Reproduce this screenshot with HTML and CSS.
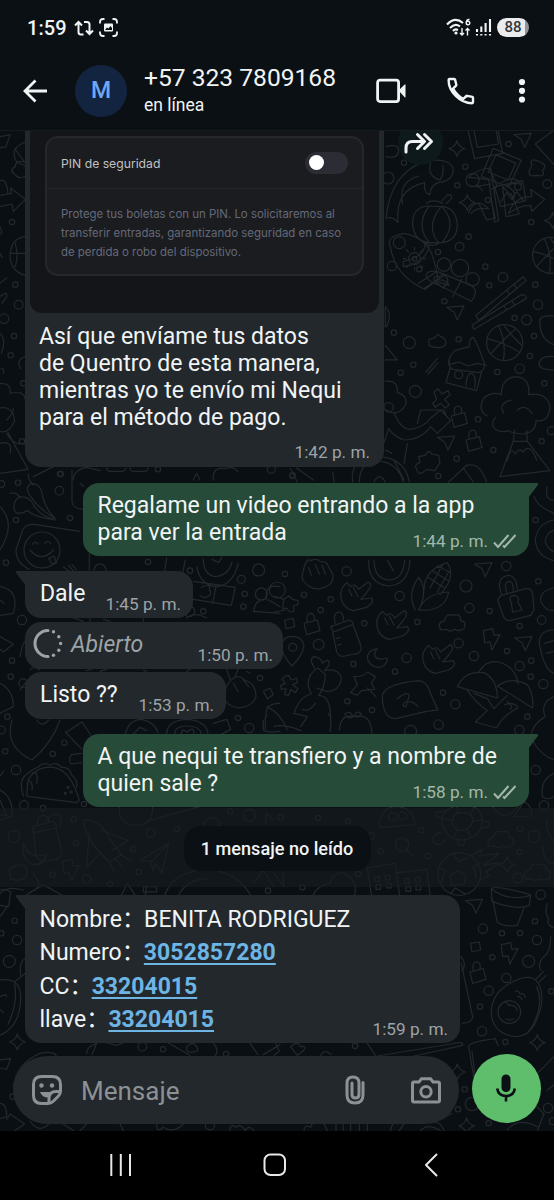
FILE: index.html
```html
<!DOCTYPE html>
<html lang="es">
<head>
<meta charset="utf-8">
<title>Chat</title>
<link rel="stylesheet" href="styles.css">
</head>
<body>
<div class="phone">
  <header class="top">
    <div class="status">
      <span class="clock">1:59</span>
      <svg class="ic-loop" width="20" height="16" viewBox="0 0 20 16"><path d="M4.500 2.500V12q0 2.500 2.500 2.500h2.500M1 5.500l3.500-3.500 3.500 3.500M10 2h3q2.500 0 2.500 2.500v9M12 10.500l3.500 3.500 3.500-3.500"/></svg>
      <svg class="ic-shot" width="19" height="19" viewBox="0 0 19 19"><path d="M1 5.500V4q0-3 3-3h1.500M13.500 1H15q3 0 3 3v1.500M18 13.500V15q0 3-3 3h-1.500M5.500 18H4q-3 0-3-3v-1.500"/><rect class="fill" x="5" y="5.500" width="9" height="8" rx="1"/><path class="dark" d="M6 12l2-2.500 1.500 1 2-2.500 1.500 2v2z"/></svg>
      <span class="grow"></span>
      <svg class="ic-wifi" width="26" height="19" viewBox="0 0 26 19"><path d="M1 6.500Q9-2 17 5M4 10Q9 4.500 14 8.500M7 13Q9 10.500 12 12"/><circle class="fill" cx="10" cy="15" r="1.600"/><path class="thin" d="M16 10v7M14 15l2 2 2-2M21.500 17.500v-7M19.500 12.500l2-2 2 2"/><path class="thin" d="M23.500 1.500Q20.500 1 20.200 4.500M20.200 5a1.800 1.800 0 1 0 3.600 0 1.800 1.800 0 1 0-3.600 0"/></svg>
      <svg class="ic-sig" width="18" height="19" viewBox="0 0 18 19"><path d="M2 11v3M6.300 8.500V14M10.600 5v9M15 1v13"/><path d="M2 16v1.500M6.300 16v1.500M10.600 16v1.500M15 16v1.500"/></svg>
      <span class="battery">88</span>
    </div>
    <div class="bar">
      <svg class="ic-back" width="26" height="26" viewBox="0 0 26 26"><path d="M25 13H3M13.500 2.500L3 13l10.500 10.500"/></svg>
      <div class="avatar">M</div>
      <div class="who"><div class="number">+57 323 7809168</div><div class="online">en línea</div></div>
      <svg class="ic-video" width="31" height="26" viewBox="0 0 31 26"><rect x="1.600" y="2.100" width="21" height="21.500" rx="2.500"/><path class="fill" d="M22.500 12.500L28.700 6.500q.8-.6.800.4v12q0 1-.8.4z"/></svg>
      <svg class="ic-call" width="28" height="28" viewBox="0 0 28 28"><path d="M2.500 2h4.700q.7 0 .9.700l1.200 5q.1.700-.4 1.100L6 11.600C8.500 16 11.700 19.300 16.200 22l2.900-2.900q.5-.5 1.200-.3l5 1.100q.7.200.7.900v4.500q0 .9-.9.900C13 26.200 1.500 14.500 1.600 2.900q0-.9.900-.9zM20 18.900l-4 3.100M9.300 8.300L6 11.600"/></svg>
      <svg class="ic-more" width="8" height="26" viewBox="0 0 8 26"><circle cx="4" cy="4" r="3.100"/><circle cx="4" cy="12.800" r="3.100"/><circle cx="4" cy="21.500" r="3.100"/></svg>
    </div>
  </header>

  <main class="chat">
    <svg class="wallpaper" width="554" height="1001" viewBox="0 130 554 1001">
      <defs>
        <path id="star" d="M0-24Q4-5 24 0 4 5 0 24-4 5-24 0-4-5 0-24z"/>
        <path id="plane" d="M-26-16L26-20 6 22-4-2z"/>
        <path id="bolt" d="M-24-24L4-30 8-10 26-12 2 34-4 10-20 12z"/>
        <path id="lens" d="M14 14L30 30M20-2A20 20 0 1 1-20-2 20 20 0 1 1 20-2z"/>
        <path id="cloud" d="M-34 20Q-46-4-22-8-18-32 4-24 26-32 26-8 46-6 36 16 20 26 8 18-6 28-16 18z"/>
        <path id="lock" d="M-22-4L18-14 26 18-14 30zM-12-8Q-18-34 0-34 12-30 8-12"/>
        <path id="ball" d="M54 0A54 54 0 1 1-54 0 54 54 0 1 1 54 0zM-52-12Q0 0 46 30M-18-50Q6 0-4 54M34-42Q-4-10-42 34M-4-54Q30-10 50 6"/>
        <path id="hand" d="M-46 0Q-54-30-30-50L-18-38Q-4-50 6-30L34-52Q52-46 28-18L12 0 44-4Q56 8 30 24L-10 34Q-38 28-46 0zM-24-30L-14-10M-10-36L4-8"/>
        <path id="box" d="M-14-10L12-14 16 10-10 16z"/>
        <path id="taco" d="M-70 40L-66-8Q-40-50 10-46 60-40 88 52L80 60-62 42zM-80 40Q-94 0-76-20-54-40-36-46-20-64 0-52 20-64 34-46 60-48 64-24 84-10 80 14"/>
        <path id="bottle" d="M-38-22L30-36 48 40Q44 56 22 60L-10 64Q-28 60-30 44zM-38-22Q-44-34-34-42L20-56Q34-50 30-36M-26-46Q-26-72-10-74 6-76 8-54"/>
        <path id="rocket" d="M-56-70Q-10-76 22-14L56 34 20 56-20 14Q-60-36-56-70zM-6-40L76-8 30 20M-40-30L-48 70-8 30M56 34L84 54M20 56L34 84M38 46L60 72"/>
        <path id="building" d="M0 100L-14 8 70-6 84 100M76 22L164 12 176 100M8 34h14v14H8zM40 30h14v14H40zM12 58h14v14H12zM44 54h14v14H44zM98 40h14v14H98zM130 36h14v14H130zM102 64h14v14h-14zM132 60h14v14h-14z"/>
      </defs>

      <g transform="translate(365.300 130) scale(.3333)">
        <use href="#star" x="275" y="56"/><use href="#star" x="306" y="218"/><use href="#star" x="562" y="272"/><use href="#plane" x="472" y="30"/><use href="#plane" x="270" y="548"/><use href="#lens" x="322" y="152"/><use href="#ball" x="418" y="508" transform="translate(0 130)"/><use href="#ball" x="556" y="376"/>
        <path d="M308 0l20 86 84-16L398 0M326 0l10 52 64-10-8-42M384 55l84 36-38 80-82-32zM392 74l60 26-24 50-60-24zM388 170l84-18 10 60-76 18zM406 216l18-28 16 20 14-24 20 28M430 250q16-50 70-50l-4-22 42 30-38 36-4-18q-34 0-66 24z"/>
        <path d="M62 264q14-130 108-166 68-20 92 12 10 40-44 48-22 8-24 36-20-4-16-36-90 20-80 120-14-20-36-14zM196 98q-12 40 28 52 14-20 8-44M112 222q-14-70 50-84"/>
        <path d="M198 92"/>
        <g transform="translate(0 -130)"><path d="M184 358q-44 6-42 56 6 52 50 54h40q46-8 44-58-6-46-44-50zM190 360q-40 56 0 106M228 360q-48 56-10 106M232 362q44 50 0 104M184 350q20-14 48 0M230 342l18-18q14 0 10 12l-14 14M176 466q24 18 44 4M180 472q-4 40-66 52v16q70-10 78-66"/></g>
        <path d="M310 142q30-26 66-28l24 158-12 4-18-128zM334 170l42-8M374 118l22 52-16 6M340 220l24 50 26-6-12-50M310 248q20-50 60-12-40-4-52 14M408 158q40-24 60 4-30-6-44 6 30 14 22 36l-34-34 10 90 40-8-24-60"/>
        <path d="M75 350q-14-30 40-40 60 10 84 60 20 60 18 80l-38 28q-90-40-104-128zM160 460l56-36M178 474l56-36M206 452l46 14q-10-20-40-16"/>
        <circle cx="148" cy="386" r="18"/><circle cx="148" cy="386" r="7"/><path d="M148 360v-8M148 412v8M122 386h-8M174 386h8M130 366l-6-6M166 366l6-6M130 406l-6 6M166 406l6 6"/>
        <circle cx="236" cy="404" r="20"/><circle cx="284" cy="414" r="26"/><circle cx="322" cy="448" r="20"/><path d="M198 456q-26-20-8-30 20-6 40 4l88 36q24 18 0 48l-92-46zM234 474l-28-22q-4-16 16-12 8-12 20 0 14 12-8 34M262 500l28-52"/>
        <path d="M332 556l142-116 8 12-142 120zM320 586l148-92q18 2 14 12L326 598zM446 462l8 14M424 480l8 12M440 512l8 14M416 528l8 12"/>
        <path d="M510 42L566 0M510 42l56 62M500 104q-10-24 24-8 24 8 8 26 10 20-20 14-24 6-20-14zM566 558q-48-4-42 20 0 50 42 66M200 650q-14 0-8-22 16-4 20-8 6-14 14 0 20 6 14 26-14 12-40 4M250 700q0-20 18-38l44-12q0-28 12-28l12 22 22 56M252 704l28-8 28 12 28-8 28 6"/>
        <circle cx="430" cy="42" r="8"/><circle cx="116" cy="98" r="8"/><circle cx="300" cy="110" r="8"/><circle cx="276" cy="166" r="8"/><circle cx="458" cy="170" r="10"/><circle cx="368" cy="210" r="8"/><circle cx="498" cy="276" r="8"/><circle cx="102" cy="338" r="18"/><circle cx="310" cy="320" r="8"/><circle cx="283" cy="350" r="13"/><circle cx="218" cy="366" r="8"/><circle cx="80" cy="408" r="14"/><circle cx="162" cy="418" r="8"/><circle cx="360" cy="410" r="8"/><circle cx="413" cy="442" r="14"/><circle cx="372" cy="466" r="8"/><circle cx="510" cy="464" r="8"/><circle cx="237" cy="514" r="8"/><circle cx="518" cy="524" r="14"/><circle cx="484" cy="570" r="15"/><circle cx="448" cy="564" r="8"/><circle cx="86" cy="608" r="8"/><circle cx="132" cy="638" r="18"/><circle cx="280" cy="628" r="8"/><circle cx="506" cy="618" r="8"/><circle cx="494" cy="678" r="8"/><circle cx="68" cy="144" r="18"/><circle cx="546" cy="162" r="13"/>
        <path d="M60 590V530q22 20 4 60M60 690h36l-36-44M62 50q40-10 38 14-4 24-38 16"/>
      </g>

      <g transform="translate(274 360) scale(.3333)">
        <g transform="translate(272 0)"><path d="M254 0q-4 22 10 28l80 10q16-8 16-26M256 24l-12 44 92 24 14-54M304 76q2-34 14-36 18 0 12 44"/><circle cx="282" cy="44" r="12"/><circle cx="152" cy="94" r="18"/><path d="M184 36l34-40M190 42l30-34"/></g>
        <path d="M480 96l12-10 12 16 18-10 6 12-16 14 14 16-12 10-14-14-16 12-8-12 12-12z"/><use href="#lock" x="554" y="172"/><use href="#lock" x="598" y="244"/><use href="#plane" x="516" y="248"/>
        <path d="M640 168q-30-16-12-52 24-24 54-12 0-50 44-54 44 4 38 54 52-8 64 34-2 50-42 44 0 36-42 40-36-4-38-10-36 10-50-14 0-20 10-26M690 160q-20-30 24-40M730 150q22-20 44 10M722 210l-4 34h42l-2-32M718 244l-40 106 150-18-68-88M700 302q10-46 24-20 12-20 24-6 20-30 40 24"/>
        <path d="M334 64q40-4 36 34 28 6 26 34-14 30-44 26l-20-10M360 158q20 50 50 50 40-6 60-34l30-24 30 32-40 38-20-20q-30 40-80 40-30-10-46-34l-20 60M430 190l10-40 70 0 8 20M400 250l-10 60M334 270l20 10"/><circle cx="344" cy="142" r="14"/>
        <path d="M434 290l20-4q8-20 20-4l20 4 4 22-16 24-24-4q-24 24-30 0-10-14 10-20zM236 366q-10-70 70-76 86 0 100 76M256 366q0-56 50-64 66 4 82 64M524 366l54-50q40-10 60 50M568 324l30 42M70 366l-20-40M180 366l-4-30M360 300l30 60M300 366q16-30 34 0"/>
        <circle cx="380" cy="38" r="8"/><circle cx="670" cy="36" r="8"/><circle cx="737" cy="26" r="14"/><circle cx="418" cy="14" r="8"/><circle cx="612" cy="178" r="8"/><circle cx="658" cy="270" r="8"/><circle cx="548" cy="296" r="8"/><circle cx="493" cy="348" r="8"/><circle cx="803" cy="244" r="8"/><circle cx="811" cy="70" r="8"/><circle cx="832" cy="212" r="12"/><circle cx="55" cy="348" r="8"/><circle cx="785" cy="480" r="8"/><path d="M840 480q-50 10-56 60 4 50 56 62M840 510q-24 10-26 34 6 24 26 30M780 410q10 30 60 50M820 380q-10 40 20 40M840 30q-50 0-44-24 10-20 44-16"/>
      </g>

      <g transform="translate(274 560) scale(.3333)">
        <path d="M86 40q10-50 24-38 20-10 30 4 20-4 24 16 26 30 0 54-34 20-60 2-26-16-18-38zM104 22l8 24M124 14l12 28M144 16l10 26M284 0q-2 72 60 78 60-4 64-78M300 0q0 56 44 60 44 0 48-60M340 0l18 32"/>
        <use href="#hand" x="248" y="118"/><use href="#hand" x="356" y="204"/><use href="#hand" x="494" y="306"/>
        <path d="M424 150q-26-50 10-98 30 40 0 98 20-50 90-54-10 60-90 54M450 90q0-60 70-82 28 44-22 96M460 50l52 34M474 32l50 30M490 18l36 18M468 84l38-70M490 96l34-60"/>
        <use href="#plane" x="628" y="28"/><use href="#plane" x="748" y="250"/><use href="#cloud" x="534" y="190"/><use href="#bolt" x="652" y="236"/><use href="#lock" x="112" y="194"/><use href="#box" x="46" y="190"/>
        <path d="M690 104l66-18q16-2 20 14l4 50-10 16-62 16q-16 0-20-14l-16-44q0-16 18-20zM682 102q-18-50 22-56 24 2 26 44M698 98q-10-34 10-34 10 2 10 28M712 128q-10-18 6-22 20 0 14 20l12 24-28 6z"/>
        <path d="M170 200l56-20q14 6 10 14l-58 22zM176 216l12 60q8 16 24 12l40-8q14-10 8-24l-22-60M184 190q-10-28 10-34 16 2 14 24M186 236l12-4M190 256l12-4"/>
        <path d="M54 318q-36-40-30-68 10-24 34-20 26 0 32 26-4 30-36 62zM68 262a12 12 0 1 1-24 0 12 12 0 1 1 24 0zM310 266q-36 8-28 36 14 26 44 18 16-14 14-26-28 8-36-4-6-10 6-24zM44 346l8 14 16-6 2 14-14 6 16 12-8 12-14-10-6 18-12-2 4-18-14 2-2-12 14-6-10-12 10-10z"/>
        <path d="M60 460q16-50 52-58l-10-24q0-40 30-54l22 20q-2 40-20 62 38 0 36 80M122 324q-20-30 0-34 20 4 24 20 20-20 20 4l-14 18q40-10 50 22-4 40-44 40l-30-10M84 448q20 10 40-18M60 460l40 10-20 30M0 500q30-10 80 12M162 460q14 10 6 54M-20 440q40 20 60 70"/>
        <path d="M240 350q30 0 40-14l24 14-12 20 10 18-40 4-12 14-20-8 20-24zM280 384l26 26M325 410q0-36 105-48 30 0 40 40l22 48-34 4-94 22q-32 0-38-50zM370 416q30-24 36-10l-10 34q-14 0-4-14 24-6 40 14"/>
        <path d="M550 380q24-50 80-42 40 20 40 76zM616 334q20-34 60-28 50 16 56 64M670 378q40-30 90-4 20 30 16 70zM580 392q30 40 60 60l-36 34 64 18q20-40 64-60-10-20-40-10M600 400l40 16 20 30 40-40M700 424q20 20 8 24"/>
        <path d="M240 470q-40-10-44 40M240 470q50-14 54 50M236 470q-4-20-24-8 10 18 24 8M240 468q10-20 22-6-8 14-22 6M840 84q-42 8-40 38 10 30 40 30M840 210q-44 0-44 40 14 80 44 90M812 250l28-8M816 280l24-6M840 410q-44 20-26 60-50 30-40 70 30 50 66 58"/>
        <circle cx="10" cy="90" r="24"/><path d="M0 108l30 10M0 156l34-6M30 118l14-10 12 10 16 4v12l-14 4 2 16-14 2-8-12-12 2z"/>
        <circle cx="33" cy="42" r="8"/><circle cx="218" cy="34" r="14"/><circle cx="90" cy="104" r="8"/><circle cx="170" cy="118" r="8"/><circle cx="140" cy="150" r="8"/><circle cx="271" cy="190" r="8"/><circle cx="377" cy="108" r="14"/><circle cx="576" cy="78" r="18"/><circle cx="586" cy="144" r="14"/><circle cx="430" cy="186" r="8"/><circle cx="647" cy="153" r="8"/><circle cx="697" cy="18" r="14"/><circle cx="793" cy="64" r="8"/><circle cx="803" cy="180" r="13"/><circle cx="554" cy="250" r="14"/><circle cx="600" cy="288" r="14"/><circle cx="699" cy="273" r="8"/><circle cx="737" cy="318" r="14"/><circle cx="772" cy="302" r="8"/><circle cx="770" cy="350" r="8"/><circle cx="808" cy="372" r="14"/><circle cx="134" cy="254" r="16"/><circle cx="398" cy="294" r="14"/><circle cx="238" cy="312" r="8"/><circle cx="363" cy="335" r="8"/><circle cx="220" cy="424" r="8"/><circle cx="294" cy="450" r="8"/><circle cx="544" cy="433" r="14"/><circle cx="507" cy="398" r="8"/><circle cx="494" cy="494" r="14"/><circle cx="760" cy="470" r="8"/><circle cx="736" cy="510" r="14"/><circle cx="410" cy="514" r="18"/><circle cx="785" cy="630" r="14"/><circle cx="737" cy="198" r="8"/><path d="M840 640q-44 20-34 70 16 12 34 0"/>
      </g>

      <g transform="translate(274 800) scale(.3333)">
        <path d="M316 70q10-50 50-50 50 0 58 54l-102 8q-8-4-6-12zM118 284q14-30 50-34 14-40 44-30 40 20 30 64M0 220l30 40-4-44"/><circle cx="356" cy="50" r="12"/><circle cx="386" cy="48" r="12"/>
        <path d="M504 66q0-44 56-50 60-4 66 44-4 54-60 60-50 0-62-54zM534 66q4-30 28-28 36 0 34 24-6 28-34 30-24-4-28-26zM506 54l28 8M548 20l6 20M600 22l-12 24M624 60l-28 4M590 112l-12-24M540 110l10-22M504 96q-30 10-30 24 10 20 30 10l10-12M620 60q28 0 24 18-12 8-24 4M552 118q-4 24 16 18l6-20M504 56q-24-8-18-18l30-6M656 20q40 60 90-20M720 50l30-46q30 20 22 44z"/>
        <use href="#lens" x="384" y="136"/><use href="#cloud" x="680" y="120"/><use href="#star" x="700" y="194"/><use href="#building" x="294" y="196"/><use href="#plane" x="600" y="318"/><use href="#box" x="604" y="440"/><use href="#bolt" x="706" y="458"/><use href="#lock" x="610" y="520"/><use href="#cloud" x="790" y="218"/>
        <circle cx="556" cy="222" r="64"/><path d="M528 226l24-14 24 14-6 26-36 4zM536 160l20 24 26-12M494 200l20 12-12 34M618 190l-20 10 10 34M530 280l14-16 30 18M590 166l36-18-10 20 60-8-46 36 46-8-40 28 10 10-30 14"/>
        <path d="M652 266q10-12 118 18l-4 32q-40 16-112-12zM656 300l14 66q20 16 60 10l20-52M652 266q50 40 118 20M806 140q4 50 34 50M820 60q-10 30 20 64M820 310q-10 30 4 44-8 20 16 30"/>
        <path d="M652 640q0-60 56-90 70-40 90 10 14 40-6 90-20 60-70 60-66-10-70-70zM796 546l20-20M800 510q-10-20 10-40 20-14 20-60M784 540l24-26"/><path d="M788 560q20 40-4 100-12 30-30 44"/><circle cx="706" cy="636" r="34"/><path d="M680 616q14-20 24 0 20-4 26 16M696 656q12 8 24 0M724 574q10-4 14 8 12-4 16 10M730 590q10-2 14 8M560 470q20 20 4 44M562 490l34 160q0 16-30 20"/>
        <circle cx="132" cy="54" r="8"/><circle cx="222" cy="64" r="8"/><circle cx="20" cy="52" r="8"/><circle cx="442" cy="90" r="8"/><circle cx="292" cy="108" r="10"/><circle cx="320" cy="154" r="8"/><circle cx="463" cy="168" r="8"/><circle cx="252" cy="222" r="8"/><circle cx="85" cy="262" r="8"/><circle cx="738" cy="86" r="8"/><circle cx="780" cy="110" r="18"/><circle cx="737" cy="156" r="8"/><circle cx="732" cy="234" r="14"/><circle cx="810" cy="16" r="14"/><circle cx="800" cy="284" r="14"/><circle cx="627" cy="386" r="14"/><circle cx="684" cy="400" r="8"/><circle cx="738" cy="400" r="8"/><circle cx="783" cy="364" r="8"/><circle cx="789" cy="420" r="14"/><circle cx="655" cy="472" r="8"/><circle cx="764" cy="484" r="18"/><circle cx="697" cy="534" r="14"/><circle cx="644" cy="572" r="14"/><circle cx="618" cy="620" r="8"/><circle cx="624" cy="694" r="14"/><circle cx="832" cy="574" r="8"/>
      </g>

      <g transform="translate(274 1030) scale(.3333)">
        <use href="#star" x="790" y="38"/><use href="#star" x="550" y="126"/><use href="#star" x="578" y="288"/>
        <path d="M584 50q0-14 80-24l8 20M594 64l12 90M584 50l20 120M310 78l220-36q40-10 36 4L420 78M280 40l24 36M50 50q20-20 30 0 20-4 8 12l-18 14zM0 30l16 34-16 12M140 78q10-24 32-4M790 130l50-50M780 220l30 32-20 50M820 180l20-16M90 302q0-20 20-10 10-30 40-10l10 20M186 302v-30M208 302v-24M230 302v-28M256 302v-26M280 302v-20M350 302q4-30 20-20M376 302l20-30M440 302q20-24 60 0M480 276q20 0 30 26M500 270l34-20M700 300q30-40 90-10"/>
        <circle cx="243" cy="48" r="8"/><circle cx="694" cy="36" r="8"/><circle cx="572" cy="178" r="8"/><circle cx="552" cy="238" r="8"/><circle cx="644" cy="280" r="8"/><circle cx="822" cy="234" r="14"/><circle cx="594" cy="222" r="20"/><circle cx="836" cy="274" r="10"/>
      </g>

      <g transform="translate(0 130) scale(.3333)">
        <path d="M0 20l30-6-12 36-18 4M76 36q-50 20-26 60l26 12M44 56l30 40M76 96q-30-8-30 14-20 10 0 24 10 16 30 4M40 130q-10-10 0-16M0 152q20-10 24 40M0 196l34-6-2-16 44 34-36 36-4-22-36 8M76 320q-44 4-46 60 4 46 46 56M46 340q10 40 0 70M34 370h42M0 290q10 20 0 24M0 370l6 12M0 460l20-16M0 500q24-20 20 0l-14 20"/><circle cx="36" cy="276" r="8"/><circle cx="46" cy="464" r="8"/><circle cx="56" cy="524" r="13"/><circle cx="12" cy="566" r="14"/>
      </g>
      <g transform="translate(0 320) scale(.3333)">
        <circle cx="42" cy="48" r="8"/><circle cx="32" cy="106" r="8"/><path d="M0 40q20 20 4 60M76 110q-30 10-14 36M0 190q36 0 30 30 44-10 46 20M0 264q40-8 44 40-20 40-44 30M20 300q20-20 20-34M0 370q40-10 30 30M20 340q20 40 60 30M0 460l84-12-60-110M0 144q14 0 10 16M220 480q0-30 40-38l40 10M320 444q0 10 12 10h34q10 0 12-10M390 444q0 10 12 10h30q12 0 12-10M580 480l10-20 10 20M640 480q-4-40 34-34 30-10 40 10M890 444l50 36"/><circle cx="180" cy="462" r="8"/><circle cx="66" cy="364" r="8"/><circle cx="70" cy="190" r="8"/><circle cx="474" cy="448" r="8"/><circle cx="814" cy="448" r="12"/><circle cx="878" cy="466" r="8"/>
      </g>
      <g transform="translate(0 470) scale(.3333)">
        <path d="M60 80q30 0 40 24 20 34 66 46-60-8-84-28-40 20-40-10 0-24 18-32zM94 40q30 0 34 40 10 40 38 66-50-30-72-64-24-30 0-42zM60 84q-10-20-30-14M100 46q-20-24-14-34M216 0v96q4 20 32 22M100 20l60-30M240 40l12 10M48 240l20-60q10-20 40-16l130 20M48 240q0 40 40 58M268 250v50"/>
        <circle cx="126" cy="240" r="54"/><path d="M90 240q34 40 70 0M98 222q8-10 16 0M134 220q10-10 18 0M146 266l16-8 8 20-12 6zM190 290l20 16M206 286l16 20M216 284l12 14M0 110q50 50 0 130M0 350q60 10 40 80L0 436M0 390l12 10M0 500l40 22-30 24-10-8M0 640q40 20 40 70L0 730M60 560q10-60 30-50M60 660q30-40 16-20"/>
        <path d="M500 264l-6 40M556 270l-8 40M590 290q10 56 60 60 50-6 65-70M610 266q0 48 36 54 40-4 50-44M636 268l20 10 10-16M580 334l126 18-12 54-114-18M648 350l-10 50M604 352q30-14 24 8 10 10-4 20-14 6-24-4"/>
        <circle cx="724" cy="328" r="12"/><circle cx="570" cy="302" r="8"/><circle cx="444" cy="276" r="8"/><circle cx="776" cy="300" r="18"/><circle cx="734" cy="372" r="8"/><circle cx="730" cy="410" r="8"/><circle cx="784" cy="372" r="18"/><path d="M762 426q0-34 30-38M840 350q-50-10-40 40M760 424l80 6M840 410l-34-20"/>
        <circle cx="610" cy="424" r="8"/><circle cx="568" cy="424" r="16"/>
        <path d="M694 630q20-20 40 0 34 10 34 50-10 30-50 34-40-6-44-30 0-40 20-54zM690 628l-10-30M704 624l10-26M730 630l16 20M700 640l14 24M790 664l20-10 10 20-18 12zM800 740q-10-40 40-40M796 780v-40"/>
        <circle cx="182" cy="12" r="8"/><circle cx="178" cy="62" r="13"/><circle cx="48" cy="150" r="8"/><circle cx="210" cy="144" r="8"/><circle cx="18" cy="278" r="8"/><circle cx="300" cy="300" r="18"/><circle cx="66" cy="450" r="14"/><circle cx="36" cy="572" r="8"/><circle cx="32" cy="620" r="8"/><circle cx="70" cy="640" r="13"/><circle cx="22" cy="740" r="8"/><circle cx="714" cy="744" r="8"/><circle cx="780" cy="624" r="8"/><circle cx="4" cy="42" r="10"/><circle cx="54" cy="38" r="8"/>
        <path d="M220 444l30 10M270 446v8M310 448l20 6M430 446v8M560 444q20-20 60 0M90 600q10-16 30 0M260 602l14-4M300 604l20-6M430 600l10 4M560 604l16-10M740 604l10 6"/>
      </g>
      <g transform="translate(0 720) scale(.3333)">
        <path d="M36 0q-24 80 60 120 60-50 84-120M110 0q16 24 36 0M200 36l46-30 40 60M196 36l50 52M244 100l-30 4q-10 16 0 28l30-4M376 42q10-44 50-44 40 10 48 40M400 42l20-20 20 10M500 42q0-40 60-44 60 4 64 44M524 42q0-24 36-24 40 0 44 24M544 42q0-20 18-6 20-20 20 6M640 10l40-12 12 30-30 16M790 0v30q10 10 50 4M0 210q40 20 36 80L0 284M0 240l20 46M0 168l10-14"/>
        <use href="#taco" x="150" y="188"/><path d="M96 160q20-10 14 30M86 180q14 10 10 30"/><circle cx="204" cy="202" r="3"/><circle cx="196" cy="220" r="3"/><circle cx="214" cy="216" r="3"/>
        <use href="#bottle" x="138" y="360"/><path d="M70 372q20 50 70 30-8 34-40 32-40-20-30-62zM142 300q10-24 40-14 4 24-6 32M28 448q20-20 44-10 16 10 4 34-20 16-44 4zM100 460l18 30-8 14"/><use href="#rocket" x="308" y="370"/><use href="#bolt" x="212" y="448"/><path d="M422 420l84-50-20 90-20-30-6 22-8-28zM456 424l50-54M358 262q-4 50 50 54 50 0 50-54M440 304l180-50M490 540q20-90 140-92 90 10 130 92M530 540q20-60 90-64M760 490l30-40 30 50M0 520q20-24 70-10M80 524l50-30 60 34M364 526l18-36 26 40M430 500h40v16h-40zM436 526l4-30M0 300l24-6M610 316q10-30 40-20 20 20 0 22M796 310l4-30 20 20"/>
        <circle cx="48" cy="150" r="14"/><circle cx="16" cy="94" r="8"/><circle cx="193" cy="68" r="8"/><circle cx="158" cy="102" r="8"/><circle cx="72" cy="255" r="13"/><circle cx="129" cy="264" r="8"/><circle cx="252" cy="252" r="8"/><circle cx="222" cy="298" r="8"/><circle cx="42" cy="350" r="18"/><circle cx="228" cy="370" r="8"/><circle cx="260" cy="478" r="13"/><circle cx="158" cy="464" r="8"/><circle cx="452" cy="338" r="13"/><circle cx="530" cy="327" r="8"/><circle cx="400" cy="388" r="8"/><circle cx="416" cy="456" r="8"/><circle cx="330" cy="492" r="8"/><circle cx="748" cy="24" r="14"/><circle cx="748" cy="286" r="18"/><circle cx="690" cy="274" r="8"/><circle cx="4" cy="30" r="12"/><circle cx="804" cy="512" r="8"/>
      </g>
      <g transform="translate(0 880) scale(.3333)">
        <path d="M0 30q20-4 32 6l-6 44-26-4M22 80L0 110M76 236q-20 10-14 50M76 280l-30 24M0 300q60-10 62 50 0 90-62 116M44 312q10 60-20 120M0 350q20-10 20 0M0 388l10 10M0 540l32-4-12 32-20-4M0 670q20 0 20 40l-20 6M20 718l10-16 44 30-30 20M40 620q10-70 80-100 50-10 50 14M90 724q30 40 60 4M180 726l40 26M240 752l20-20M360 732l10 20M470 732q0 30 20 10 30 20 60-10M690 752q0-24 20-10 10-14 26 10 10-20 26 0M260 520q0-20 30-30M290 490l-14 34M310 486l40 10 20-8M500 486l70 40M640 490q20 20 4 40M750 490l24 34M790 524l50-30M560 500q20-20 30 0 10 14-10 16-24 4-20-16"/><use href="#star" x="52" y="486"/>
        <circle cx="44" cy="122" r="8"/><circle cx="51" cy="180" r="14"/><circle cx="28" cy="244" r="18"/><circle cx="4" cy="160" r="8"/><circle cx="427" cy="500" r="13"/><circle cx="489" cy="508" r="8"/><circle cx="678" cy="522" r="8"/><circle cx="630" cy="736" r="14"/><circle cx="38" cy="650" r="8"/>
      </g>
    </svg>

    <div class="forward"><svg width="30" height="22" viewBox="0 0 30 22"><path d="M2 20v-4q0-6.500 6.500-6.500H20M13.500 2.500l7 7-7 7M20.500 2.500l7 7-7 7"/></svg></div>

    <div class="thread">
      <article class="msg in first">
        <div class="shot">
          <div class="pin">
            <div class="pin-head"><span>PIN de seguridad</span><i class="toggle"></i></div>
            <p>Protege tus boletas con un PIN. Lo solicitaremos al<br>transferir entradas, garantizando seguridad en caso<br>de perdida o robo del dispositivo.</p>
          </div>
        </div>
        <p class="text">Así que envíame tus datos<br>de Quentro de esta manera,<br>mientras yo te envío mi Nequi<br>para el método de pago.</p>
        <span class="meta">1:42 p. m.</span>
      </article>
      <article class="msg out">
        <svg class="tail" width="11" height="16" viewBox="0 0 11 16"><path d="M0 0h8.500q3 0 1 2.500L0 15z"/></svg>
        <p class="text">Regalame un video entrando a la app<br>para ver la entrada</p>
        <span class="meta">1:44 p. m.<svg class="ticks" width="24" height="17" viewBox="0 0 24 17"><path d="M1 9.500l4 4.500L15.500 2M10 12.500l1.500 1.500L22.500 2"/></svg></span>
      </article>
      <article class="msg in short dale">
        <svg class="tail" width="11" height="16" viewBox="0 0 11 16"><path d="M11 0H2.500q-3 0-1 2.500L11 15z"/></svg>
        <p class="text">Dale</p><span class="meta">1:45 p. m.</span>
      </article>
      <article class="msg in short opened">
        <svg class="once" width="31" height="31" viewBox="0 0 31 31"><path d="M16 2.500a13 13 0 1 0 0 26"/><circle cx="21.500" cy="3.800" r="1.700"/><circle cx="26.800" cy="8.700" r="1.700"/><circle cx="28.600" cy="15.500" r="1.700"/><circle cx="26.800" cy="22.300" r="1.700"/><circle cx="21.500" cy="27.200" r="1.700"/></svg>
        <p class="text">Abierto</p><span class="meta">1:50 p. m.</span>
      </article>
      <article class="msg in short listo">
        <p class="text">Listo ??</p><span class="meta">1:53 p. m.</span>
      </article>
      <article class="msg out second">
        <svg class="tail" width="11" height="16" viewBox="0 0 11 16"><path d="M0 0h8.500q3 0 1 2.500L0 15z"/></svg>
        <p class="text">A que nequi te transfiero y a nombre de<br>quien sale ?</p>
        <span class="meta">1:58 p. m.<svg class="ticks" width="24" height="17" viewBox="0 0 24 17"><path d="M1 9.500l4 4.500L15.500 2M10 12.500l1.500 1.500L22.500 2"/></svg></span>
      </article>
      <div class="unread"><span>1 mensaje no leído</span></div>
      <article class="msg in account">
        <svg class="tail" width="11" height="16" viewBox="0 0 11 16"><path d="M11 0H2.500q-3 0-1 2.500L11 15z"/></svg>
        <p class="text">Nombre<b>：</b>BENITA RODRIGUEZ<br>Numero<b>：</b><a>3052857280</a><br>CC<b>：</b><a>33204015</a><br>llave<b>：</b><a>33204015</a></p>
        <span class="meta">1:59 p. m.</span>
      </article>
      <div class="composer">
        <div class="field">
          <svg class="ic-sticker" width="30" height="30" viewBox="0 0 30 30"><path d="M9.500 1.500h11q8 0 8 8v6.500q0 3-2 5l-5.500 5.500q-2 2-5 2H9.500q-8 0-8-8v-11q0-8 8-8zM28 16.500h-4q-7 0-7 7v4.500"/><circle class="fill" cx="9.500" cy="10.500" r="2.200"/><circle class="fill" cx="20" cy="10.500" r="2.200"/><path class="fill" d="M8 17h13q-4 1.500-4.500 5.500Q10 22.500 8 17z"/></svg>
          <span class="hint">Mensaje</span>
          <svg class="ic-clip" width="20" height="30" viewBox="0 0 20 30"><path d="M18 7.500V20q0 8-8 8t-8-8V8q0-6 6-6t6 6v11.500q0 3.500-3.500 3.500T7 19.500V8"/></svg>
          <svg class="ic-cam" width="30" height="27" viewBox="0 0 30 27"><path d="M3 5h5l2.500-3.300h9L22 5h5q1.500 0 1.500 1.500v17Q28.500 25 27 25H3q-1.500 0-1.500-1.500v-17Q1.500 5 3 5z"/><circle cx="15" cy="14.800" r="5.200"/></svg>
        </div>
        <div class="mic"><svg width="20" height="29" viewBox="0 0 20 29"><rect class="fill" x="5.500" y="0.500" width="9" height="17.500" rx="4.500"/><path d="M1.200 14.500q1 7.500 8.800 7.500t8.800-7.500M10 22v5.500"/></svg></div>
      </div>
    </div>
  </main>

  <nav class="nav">
    <svg width="22" height="22" viewBox="0 0 22 22"><path d="M1.300 0v22M10.800 0v22M20 0v22"/></svg>
    <svg class="ic-home" width="24" height="24" viewBox="0 0 24 24"><rect x="1.500" y="1.500" width="20.500" height="20.500" rx="6"/></svg>
    <svg width="14" height="24" viewBox="0 0 14 24"><path d="M12.500 1.500L2 12l10.500 10.500"/></svg>
  </nav>
</div>
</body>
</html>
```
FILE: styles.css
```css
* { box-sizing: border-box; }
body { margin: 0; background: #000; font-family: Roboto, "Noto Sans CJK SC", sans-serif; color: #f1f4f5; }
p { margin: 0; }
svg { display: block; flex: none; fill: none; stroke: #f1f4f5; }
svg .fill { fill: #f1f4f5; stroke: none; }
.phone { width: 554px; height: 1200px; display: flex; flex-direction: column; overflow: hidden; }

.top { height: 131px; flex: none; background: #0b1014; border-bottom: 1px solid #151b1f; position: relative; z-index: 3; }
.status { height: 54px; display: flex; align-items: center; padding: 1px 25px 0 27px; }
.clock { font-size: 20px; font-weight: 500; width: 47px; letter-spacing: .1px; }
.grow { flex: 1; }
.ic-loop { stroke-width: 2; margin-right: 5px; }
.ic-shot { stroke-width: 1.8; }
.ic-shot .dark { fill: #0b1014; stroke: none; }
.ic-wifi { stroke-width: 2.100; margin-right: 3px; }
.ic-wifi .thin { stroke-width: 1.400; }
.ic-sig { stroke-width: 2.100; margin-right: 4px; }
.battery { width: 32px; height: 19px; border-radius: 10px; background: linear-gradient(90deg, #ebecee 28px, #909397 28px); color: #33373b; font: 500 15px/19px Roboto, sans-serif; text-align: center; }
.bar { height: 73px; display: flex; align-items: center; padding: 0 27px 0 22px; }
.ic-back { stroke-width: 2.800; margin-right: 27px; }
.avatar { width: 52px; height: 52px; border-radius: 50%; background: #12243f; color: #70a7f5; font: 500 23px/52px Roboto, sans-serif; text-align: center; margin-right: 17px; }
.who { width: 232px; padding-bottom: 3px; }
.number { font-size: 24.600px; line-height: 29px; white-space: nowrap; }
.online { font-size: 17.500px; line-height: 22px; margin-top: 2px; }
.ic-video { stroke-width: 2.800; margin-right: 40px; }
.ic-call { stroke-width: 2.400; margin-right: 43px; }
.ic-more { stroke: none; fill: #f1f4f5; }

.chat { height: 1000px; flex: none; position: relative; background: #0a0f13; overflow: hidden; }
.wallpaper { position: absolute; left: 0; top: -1px; stroke: #22282c; stroke-width: 3.700; stroke-linejoin: round; stroke-linecap: round; }
.forward { position: absolute; left: 398px; top: -11px; width: 45px; height: 45px; border-radius: 50%; background: #0e191b; display: flex; align-items: center; justify-content: center; }
.forward svg { stroke-width: 3; stroke-linecap: round; stroke-linejoin: round; margin-right: 3px; }
.thread { position: relative; display: flex; flex-direction: column; }

.msg { position: relative; border-radius: 16px; display: flex; flex-direction: column; font-size: 23px; }
.text { line-height: 27.200px; white-space: nowrap; }
.in { background: #23282c; align-self: flex-start; margin-left: 25px; }
.out { background: #264b38; align-self: flex-end; margin-right: 25px; width: 446px; height: 73px; padding: 8.500px 12px 0 14.500px; margin-top: 16px; border-top-right-radius: 0; }
.meta { font-size: 17.200px; line-height: 20px; color: #9da3a6; align-self: flex-end; display: flex; align-items: center; gap: 5px; white-space: nowrap; }
.out .meta { margin-top: -14.500px; color: #a3b8ab; }
.ticks { stroke: #a3b8ab; stroke-width: 2; }
.tail { position: absolute; top: 0; stroke: none; }
.in .tail { left: -10px; fill: #23282c; }
.out .tail { right: -10px; fill: #264b38; }

.first { width: 359px; height: 336px; border-radius: 0 0 16px 16px; padding: 0 5px; }
.shot { height: 182px; flex: none; background: #141519; border-radius: 0 0 12px 12px; padding: 5px 15px 0; margin-bottom: 9.500px; }
.pin { height: 140px; border: 2px solid #25272b; border-radius: 13px; background: #1b1c20; font-family: Inter, sans-serif; }
.pin-head { height: 51px; border-bottom: 1px solid #25272b; display: flex; align-items: center; justify-content: space-between; padding: 0 14px; font-size: 12.200px; color: #c0c1c4; }
.toggle { width: 43px; height: 22px; border-radius: 11px; background: #2b2c34; padding: 3px 4px; }
.toggle::before { content: ""; display: block; width: 15px; height: 15px; border-radius: 50%; background: #fff; }
.pin p { padding: 15.500px 0 0 14px; font-size: 11.430px; line-height: 19px; color: #646a79; white-space: nowrap; }
.first .text { padding-left: 9px; }
.first .meta { margin: 11px 9px 0 0; }

.short { height: 47px; flex-direction: row; padding: 9px 12px 0 15px; justify-content: space-between; align-items: flex-start; }
.short .meta { align-self: flex-start; margin-top: 14px; }
.dale { width: 168px; margin-top: 15px; border-top-left-radius: 0; }
.opened { width: 258px; margin-top: 4px; padding-left: 7px; justify-content: flex-start; }
.opened .text { font-style: italic; color: #9da3a6; margin-left: 8px; }
.opened .meta { margin-left: auto; margin-right: -2px; }
.once { stroke: #9da3a6; stroke-width: 3; stroke-linecap: round; margin-top: -3px; }
.once circle { fill: #9da3a6; stroke: none; }
.listo { width: 201px; margin-top: 3px; }
.second { margin-top: 15px; }

.unread { height: 79px; margin-top: 1px; background: rgba(22, 29, 33, .6); display: flex; justify-content: center; padding-top: 18px; }
.unread span { width: 187px; height: 45px; border-radius: 17px; background: #0b1014; font-weight: 500; font-size: 18.100px; line-height: 46px; text-align: center; }

.account { width: 435px; height: 148px; margin-top: 8px; padding: 8px 12px 0 14.500px; border-top-left-radius: 0; }
.account .text { line-height: 33.300px; height: 116px; }
.account b { font-weight: 400; margin-right: -.8px; }
.account a { color: #6cb5e5; font-weight: 700; text-decoration: underline; text-decoration-thickness: 1.500px; text-underline-offset: 3px; }

.composer { display: flex; margin: 11px 13px 0; gap: 12.500px; align-items: flex-start; }
.field { width: 446px; height: 68px; margin-top: 2px; border-radius: 34px; background: #23282c; display: flex; align-items: center; padding: 0 18px 0 19px; }
.field svg { stroke: #8c9194; stroke-width: 3; }
.field svg .fill { fill: #8c9194; stroke: none; }
.hint { font-size: 26px; color: #8c9194; margin-left: 19px; padding-top: 2px; flex: 1; }
.ic-clip { margin-right: 46px; stroke-linecap: round; }
.mic { width: 69px; height: 69px; border-radius: 50%; background: #5ebe6c; display: flex; align-items: center; justify-content: center; }
.mic svg { stroke: #0b1014; stroke-width: 2.600; }
.mic .fill { fill: #0b1014; }

.nav { height: 69px; flex: none; background: #000; display: flex; align-items: center; padding: 0 116px 2px 110px; justify-content: space-between; position: relative; z-index: 3; }
.nav svg { stroke: #e8e8e8; stroke-width: 2; stroke-linecap: round; stroke-linejoin: round; }
.nav .ic-home { margin: 0 6px 0 0; }
```
